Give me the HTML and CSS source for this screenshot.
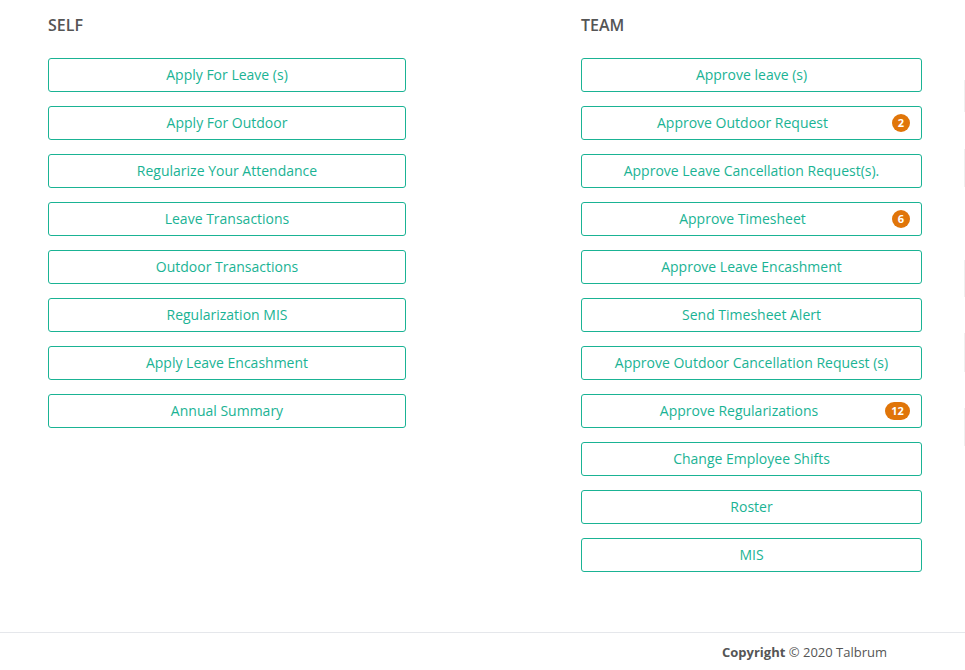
FILE: index.html
```html
<!DOCTYPE html>
<html>
<head>
<meta charset="utf-8">
<link rel="stylesheet" href="styles.css">
</head>
<body>
<div class="page">
  <main class="main">
    <section class="col col-self">
      <h2 class="heading">SELF</h2>
      <div class="list">
        <a class="btn"><span class="label">Apply For Leave (s)</span></a>
        <a class="btn"><span class="label">Apply For Outdoor</span></a>
        <a class="btn"><span class="label">Regularize Your Attendance</span></a>
        <a class="btn"><span class="label">Leave Transactions</span></a>
        <a class="btn"><span class="label">Outdoor Transactions</span></a>
        <a class="btn"><span class="label">Regularization MIS</span></a>
        <a class="btn"><span class="label">Apply Leave Encashment</span></a>
        <a class="btn"><span class="label">Annual Summary</span></a>
      </div>
    </section>
    <section class="col col-team">
      <h2 class="heading">TEAM</h2>
      <div class="list">
        <a class="btn"><span class="label">Approve leave (s)</span></a>
        <a class="btn"><span class="label">Approve Outdoor Request</span><span class="badge">2</span></a>
        <a class="btn"><span class="label">Approve Leave Cancellation Request(s).</span></a>
        <a class="btn"><span class="label">Approve Timesheet</span><span class="badge">6</span></a>
        <a class="btn"><span class="label">Approve Leave Encashment</span></a>
        <a class="btn"><span class="label">Send Timesheet Alert</span></a>
        <a class="btn"><span class="label">Approve Outdoor Cancellation Request (s)</span></a>
        <a class="btn"><span class="label">Approve Regularizations</span><span class="badge badge-wide">12</span></a>
        <a class="btn"><span class="label">Change Employee Shifts</span></a>
        <a class="btn"><span class="label">Roster</span></a>
        <a class="btn"><span class="label">MIS</span></a>
      </div>
    </section>
    <section class="col col-cut">
      <div class="cut cut1"></div>
      <div class="cut cut2"></div>
      <div class="cut cut3"></div>
      <div class="cut cut4"></div>
      <div class="cut cut5"></div>
    </section>
  </main>
  <footer class="footer">
    <p class="copy"><strong>Copyright</strong> © 2020 Talbrum</p>
  </footer>
</div>
</body>
</html>
```

FILE: styles.css
```css
* { box-sizing: border-box; }
html, body { margin: 0; padding: 0; background: #fff; }
body {
  font-family: "Open Sans", "Liberation Sans", sans-serif;
  color: #555;
  width: 965px;
  height: 670px;
  overflow: hidden;
}
.page { display: flex; flex-direction: column; height: 670px; }
.main {
  display: flex;
  padding-left: 48px;
  height: 632px;
  overflow: hidden;
}
.col { flex-shrink: 0; }
.col-self { width: 358px; }
.col-team { width: 341px; margin-left: 175px; }
.col-cut { width: 20px; margin-left: 42px; padding-top: 80px; }
.heading {
  margin: 15px 0 23px;
  font-size: 16px;
  line-height: 20px;
  font-weight: 600;
  color: #555;
}
.list { display: flex; flex-direction: column; gap: 14px; }
.btn {
  display: flex;
  align-items: center;
  height: 34px;
  padding: 0 11px 2px;
  border: 1px solid #1ab394;
  border-radius: 3px;
  color: #1ab394;
  font-size: 14px;
  text-decoration: none;
}
.label { flex: 1; text-align: center; white-space: nowrap; }
.badge {
  flex-shrink: 0;
  min-width: 18px;
  height: 18px;
  margin-top: 2px;
  padding: 0 4px;
  border-radius: 9px;
  background: #e07509;
  color: #fff;
  font-size: 11px;
  font-weight: 700;
  line-height: 18px;
  text-align: center;
}
.badge-wide { min-width: 25px; }
.cut { border-left: 1px solid #f0f0f0; }
.cut1 { height: 32px; margin-bottom: 37px; }
.cut2 { height: 38px; margin-bottom: 73px; }
.cut3 { height: 37px; margin-bottom: 36px; }
.cut4 { height: 39px; margin-bottom: 36px; }
.cut5 { height: 38px; }
.footer {
  border-top: 1px solid #e5e7eb;
  flex: 1;
  display: flex;
  justify-content: flex-end;
  padding-right: 78px;
}
.copy {
  margin: 9px 0 0;
  font-size: 13px;
  line-height: 20px;
  color: #555;
}
.copy strong { font-weight: 700; }
```
